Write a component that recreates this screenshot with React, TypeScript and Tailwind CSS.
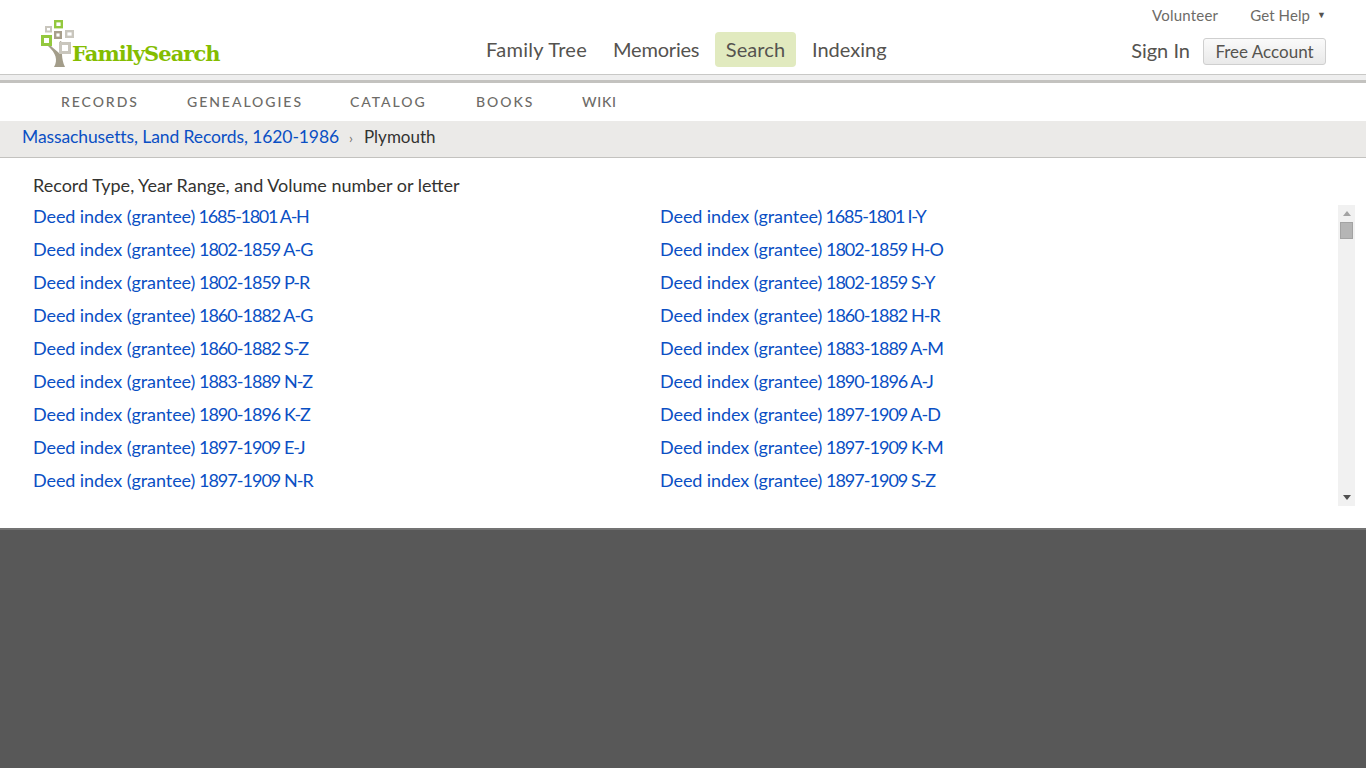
const leftLinks = [
  'Deed index (grantee) 1685-1801 A-H',
  'Deed index (grantee) 1802-1859 A-G',
  'Deed index (grantee) 1802-1859 P-R',
  'Deed index (grantee) 1860-1882 A-G',
  'Deed index (grantee) 1860-1882 S-Z',
  'Deed index (grantee) 1883-1889 N-Z',
  'Deed index (grantee) 1890-1896 K-Z',
  'Deed index (grantee) 1897-1909 E-J',
  'Deed index (grantee) 1897-1909 N-R',
];

const rightLinks = [
  'Deed index (grantee) 1685-1801 I-Y',
  'Deed index (grantee) 1802-1859 H-O',
  'Deed index (grantee) 1802-1859 S-Y',
  'Deed index (grantee) 1860-1882 H-R',
  'Deed index (grantee) 1883-1889 A-M',
  'Deed index (grantee) 1890-1896 A-J',
  'Deed index (grantee) 1897-1909 A-D',
  'Deed index (grantee) 1897-1909 K-M',
  'Deed index (grantee) 1897-1909 S-Z',
];

// "Deed index (grantee)" keeps its width, the years and letters are tightened
const DeedLink = ({ label }: { label: string }) => {
  const name = label.slice(0, 20);
  const rest = label.slice(20);
  return (
    <a className="whitespace-nowrap">
      <span className="tracking-[-0.08px]">{name}</span>
      <span className={rest.includes('1685') ? 'tracking-[-1.3px]' : 'tracking-[-0.98px]'}>{rest}</span>
    </a>
  );
};

const Logo = () => (
  <div className="relative w-[180px] h-[50px]">
    <svg width="48" height="50" viewBox="0 0 48 50" className="absolute left-0 top-0">
      <path d="M14 47 C18 40 16 33 8 26 L10 25 C14 29 17 31 19 33 C19 29 19 25 20 21 L22 22 C22 30 21 39 25 47 Z" fill="#a39d8a" />
      <rect x="2.5" y="16.5" width="8" height="8" fill="#fff" stroke="#93c83e" strokeWidth="3" />
      <rect x="6" y="7" width="5" height="4.5" fill="#fff" stroke="#c9c6bd" strokeWidth="2" />
      <rect x="15.2" y="1.2" width="6.6" height="6" fill="#fff" stroke="#93c83e" strokeWidth="2.4" />
      <rect x="15.2" y="12.2" width="5.6" height="5.6" fill="#fff" stroke="#a89f8c" strokeWidth="2.4" />
      <rect x="26.2" y="11.2" width="6.6" height="5.6" fill="#fff" stroke="#c9c6bd" strokeWidth="2.4" />
      <rect x="20.5" y="23.5" width="9" height="9" fill="#fff" stroke="#c9c6bd" strokeWidth="3" />
    </svg>
    <span className="absolute left-[32px] top-[21px] font-['DejaVu_Serif',serif] font-bold text-[21px] leading-[26px] tracking-[-0.95px] text-[#84bd00]">
      FamilySearch
    </span>
  </div>
);

export default function App() {
  return (
    <div className="min-h-[768px] bg-[#585858] font-['Lato','Open_Sans',sans-serif]">
      <header className="h-[75px] bg-white border-b border-[#c8c8c6] flex pl-[40px] pr-[40px]">
        <div className="w-[446px] pt-[20px]">
          <Logo />
        </div>
        <nav className="flex items-start pt-[32px] text-[20px] leading-[34px] text-[#55534f]">
          <a className="w-[127px] tracking-[0.3px]">Family Tree</a>
          <a className="w-[102px] tracking-[-0.2px]">Memories</a>
          <a className="w-[81px] h-[35px] rounded-[4px] bg-[#e1eabf] text-center tracking-[0.1px]">Search</a>
          <a className="pl-[16px]">Indexing</a>
        </nav>
        <div className="ml-auto flex flex-col items-end">
          <div className="flex items-center h-[30px] text-[15px] text-[#6d6b67]">
            <a className="tracking-[0.2px]">Volunteer</a>
            <a className="ml-[32px] tracking-[0.1px]">Get Help</a>
            <span className="ml-[7px] text-[9px] text-[#55534f]">▼</span>
          </div>
          <div className="flex items-center mt-[8px]">
            <a className="text-[20px] leading-[24px] mb-[3px] text-[#55534f]">Sign In</a>
            <button className="ml-[13px] w-[123px] h-[27px] rounded-[3px] border border-[#cfcfcf] bg-gradient-to-b from-[#fafafa] to-[#e9e9e9] text-[17px] leading-[23px] text-[#55534f]">
              Free Account
            </button>
          </div>
        </div>
      </header>

      <div className="h-[5px] bg-[#eeeeee]" />
      <div className="h-[3px] bg-[#c3c2bf]" />

      <nav className="h-[38px] bg-white flex items-center pl-[61px] pb-[2px] text-[14px] font-medium tracking-[1.95px] text-[#6d6b67]">
        <a className="w-[126px]">RECORDS</a>
        <a className="w-[163px]">GENEALOGIES</a>
        <a className="w-[126px]">CATALOG</a>
        <a className="w-[106px]">BOOKS</a>
        <a className="tracking-[0.7px]">WIKI</a>
      </nav>

      <div className="h-[37px] bg-[#ebeae8] border-b border-[#c3c2bf] flex items-center pl-[22px] pb-[4px] text-[17.5px] text-[#333331]">
        <a className="text-[#0a4fc4] tracking-[-0.1px]">Massachusetts, Land Records, 1620-1986</a>
        <span className="ml-[10px] mr-[11px] text-[14px] text-[#77756f]">›</span>
        <span className="text-[17px]">Plymouth</span>
      </div>

      <main className="h-[372px] bg-white border-b-2 border-[#737373] pl-[33px] pt-[16px]">
        <p className="h-[26px] text-[18px] leading-[22px] text-[#333331]">
          Record Type, Year Range, and Volume number or letter
        </p>
        <div className="flex">
          <div className="w-[1305px] grid grid-cols-[627px_1fr] auto-rows-[33px] text-[18px] leading-[33px] text-[#0a4fc4]">
            {leftLinks.map((label, i) => (
              <div key={label} className="contents">
                <DeedLink label={label} />
                <DeedLink label={rightLinks[i]} />
              </div>
            ))}
          </div>
          <div className="w-[17px] h-[301px] mt-[5px] bg-[#f1f1f1] flex flex-col items-center">
            <div className="h-[17px] flex items-center">
              <svg width="8" height="5" viewBox="0 0 8 5"><path d="M4 0 L8 5 H0 Z" fill="#a3a3a3" /></svg>
            </div>
            <div className="w-[13px] h-[17px] bg-[#b5b5b5] border border-[#a3a3a3]" />
            <div className="mt-auto h-[17px] flex items-center">
              <svg width="8" height="5" viewBox="0 0 8 5"><path d="M0 0 H8 L4 5 Z" fill="#505050" /></svg>
            </div>
          </div>
        </div>
      </main>
    </div>
  );
}
